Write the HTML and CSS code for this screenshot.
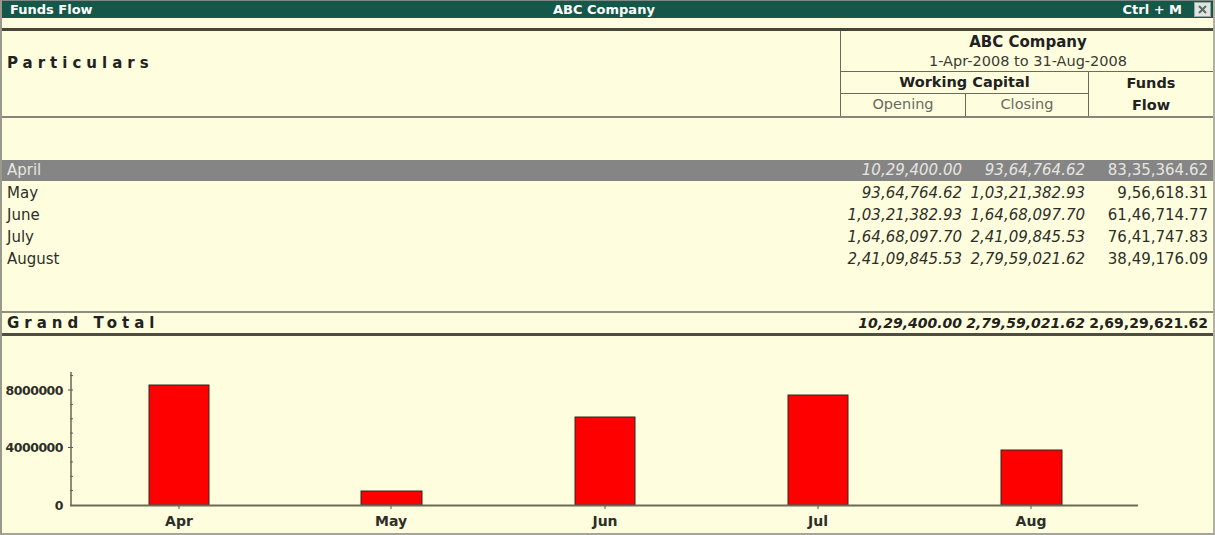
FILE: index.html
```html
<!DOCTYPE html>
<html>
<head>
<meta charset="utf-8">
<title>Funds Flow</title>
<link rel="stylesheet" href="styles.css">
</head>
<body>
<div class="window">
  <div class="titlebar">
    <span class="t-left">Funds Flow</span>
    <span class="t-center">ABC Company</span>
    <span class="t-right">Ctrl + M <span class="close"><svg width="15" height="13" viewBox="0 0 15 13"><path d="M4 3 L11 10 M11 3 L4 10" stroke="#5a6a66" stroke-width="2"/></svg></span></span>
  </div>
  <div class="spacer"></div>
  <div class="report">
    <div class="header">
      <div class="particulars">Particulars</div>
      <div class="period">
        <div class="company">
          <div class="cname">ABC Company</div>
          <div class="cdate">1-Apr-2008 to 31-Aug-2008</div>
        </div>
        <div class="subhead">
          <div class="wc">
            <div class="wc-title">Working Capital</div>
            <div class="wc-cols">
              <div class="wc-open">Opening</div>
              <div class="wc-close">Closing</div>
            </div>
          </div>
          <div class="ff">Funds<br>Flow</div>
        </div>
      </div>
    </div>
    <div class="rows">
      <div class="row selected"><span class="label">April</span><span class="n1">10,29,400.00</span><span class="n2">93,64,764.62</span><span class="n3">83,35,364.62</span></div>
      <div class="row"><span class="label">May</span><span class="n1">93,64,764.62</span><span class="n2">1,03,21,382.93</span><span class="n3">9,56,618.31</span></div>
      <div class="row"><span class="label">June</span><span class="n1">1,03,21,382.93</span><span class="n2">1,64,68,097.70</span><span class="n3">61,46,714.77</span></div>
      <div class="row"><span class="label">July</span><span class="n1">1,64,68,097.70</span><span class="n2">2,41,09,845.53</span><span class="n3">76,41,747.83</span></div>
      <div class="row"><span class="label">August</span><span class="n1">2,41,09,845.53</span><span class="n2">2,79,59,021.62</span><span class="n3">38,49,176.09</span></div>
    </div>
    <div class="total">
      <span class="label">Grand Total</span><span class="n1">10,29,400.00</span><span class="n2">2,79,59,021.62</span><span class="n3">2,69,29,621.62</span>
    </div>
    <div class="chart">
      <svg width="1211" height="197" viewBox="2 336 1211 197">
        <g class="ylabels">
          <text x="63" y="395" text-anchor="end">8000000</text>
          <text x="63" y="452" text-anchor="end">4000000</text>
          <text x="63" y="510" text-anchor="end">0</text>
        </g>
        <g stroke="#55554a" stroke-width="1">
          <line x1="70" y1="490.6" x2="73" y2="490.6"/>
          <line x1="70" y1="476.3" x2="73" y2="476.3"/>
          <line x1="70" y1="461.9" x2="73" y2="461.9"/>
          <line x1="68" y1="447.5" x2="73" y2="447.5"/>
          <line x1="70" y1="433.1" x2="73" y2="433.1"/>
          <line x1="70" y1="418.8" x2="73" y2="418.8"/>
          <line x1="70" y1="404.4" x2="73" y2="404.4"/>
          <line x1="68" y1="390" x2="73" y2="390"/>
          <line x1="70" y1="375.6" x2="73" y2="375.6"/>
        </g>
        <g fill="#ff0000" stroke="#2a2a20" stroke-width="1">
          <rect x="149" y="385" width="60" height="120"/>
          <rect x="361" y="491" width="61" height="14"/>
          <rect x="575" y="417" width="60" height="88"/>
          <rect x="788" y="395" width="60" height="110"/>
          <rect x="1001" y="450" width="61" height="55"/>
        </g>
        <line x1="71" y1="372" x2="71" y2="506" stroke="#66665a" stroke-width="1.5"/>
        <line x1="70" y1="505.5" x2="1138" y2="505.5" stroke="#6b6b58" stroke-width="2"/>
        <g stroke="#55554a" stroke-width="1">
          <line x1="179" y1="506" x2="179" y2="509"/>
          <line x1="391" y1="506" x2="391" y2="509"/>
          <line x1="605" y1="506" x2="605" y2="509"/>
          <line x1="818" y1="506" x2="818" y2="509"/>
          <line x1="1031" y1="506" x2="1031" y2="509"/>
        </g>
        <g class="xlabels" text-anchor="middle">
          <text x="179" y="526">Apr</text>
          <text x="391" y="526">May</text>
          <text x="605" y="526">Jun</text>
          <text x="818" y="526">Jul</text>
          <text x="1031" y="526">Aug</text>
        </g>
      </svg>
    </div>
  </div>
</div>
</body>
</html>
```
FILE: styles.css
```css
html, body {
  margin: 0;
  padding: 0;
  background: #fefedf;
}
body {
  font-family: "DejaVu Sans", Verdana, sans-serif;
  color: #2e2e28;
}
.window {
  width: 1215px;
  height: 535px;
  box-sizing: border-box;
  background: #fefedf;
  border-left: 2px solid #9a9a8c;
  border-right: 2px solid #b0b0a4;
  border-bottom: 2px solid #a4a498;
  overflow: hidden;
  position: relative;
}
.titlebar {
  height: 18px;
  margin-left: -2px;
  margin-right: -2px;
  background: #15584a;
  border-top: 1px solid #7c8a84;
  box-sizing: border-box;
  display: flex;
  align-items: center;
  justify-content: space-between;
  color: #ffffff;
  font-weight: bold;
  font-size: 13px;
  padding: 0 4px 0 10px;
  position: relative;
}
.t-center {
  position: absolute;
  left: 553px;
  top: 0;
  line-height: 17px;
}
.t-right {
  display: flex;
  align-items: center;
  gap: 12px;
}
.close {
  display: inline-block;
  width: 15px;
  height: 13px;
  background: #dfe4e0;
  border: 1px solid #9aa8a2;
  line-height: 0;
}
.spacer {
  height: 10px;
}
.report {
  border-top: 3px solid #45453a;
}
.header {
  display: flex;
  height: 85px;
  border-bottom: 2px solid #85857a;
}
.particulars {
  flex: 1;
  font-weight: bold;
  font-size: 15px;
  letter-spacing: 5px;
  padding: 23px 0 0 5px;
  color: #222;
}
.period {
  width: 372px;
  border-left: 1px solid #6b6b5e;
  display: flex;
  flex-direction: column;
}
.company {
  height: 40px;
  border-bottom: 1px solid #6b6b5e;
  text-align: center;
  padding-left: 2px;
}
.cname {
  font-weight: bold;
  font-size: 15px;
  line-height: 19px;
  margin-top: 2px;
  color: #222;
}
.cdate {
  font-size: 14.5px;
  line-height: 18px;
  color: #3a3a34;
}
.subhead {
  flex: 1;
  display: flex;
}
.wc {
  width: 247px;
  display: flex;
  flex-direction: column;
}
.wc-title {
  height: 22px;
  box-sizing: border-box;
  border-bottom: 1px solid #6b6b5e;
  text-align: center;
  font-weight: bold;
  font-size: 14.5px;
  line-height: 21px;
  color: #222;
}
.wc-cols {
  flex: 1;
  display: flex;
}
.wc-open, .wc-close {
  text-align: center;
  font-size: 14.5px;
  line-height: 21px;
  color: #6a6a62;
}
.wc-open {
  width: 124px;
  border-right: 1px solid #6b6b5e;
}
.wc-close {
  flex: 1;
}
.ff {
  flex: 1;
  border-left: 1px solid #6b6b5e;
  text-align: center;
  font-weight: bold;
  font-size: 14.5px;
  line-height: 22px;
  color: #222;
}
.rows {
  padding-top: 42px;
  height: 193px;
  box-sizing: border-box;
}
.row, .total {
  display: flex;
  height: 22px;
  line-height: 22px;
  font-size: 15px;
}
.row.selected {
  height: 21px;
  line-height: 21px;
  background: #858585;
  color: #e6e6e0;
  margin-bottom: 1px;
}
.label {
  flex: 1;
  padding-left: 5px;
}
.n1, .n2, .n3 {
  text-align: right;
  white-space: nowrap;
}
.n1 {
  width: 122px;
  padding-right: 3px;
  font-style: italic;
}
.n2 {
  width: 120px;
  padding-right: 3px;
  font-style: italic;
}
.n3 {
  width: 120px;
  padding-right: 5px;
}
.total {
  height: 20px;
  line-height: 20px;
  border-top: 2px solid #8c8c80;
  border-bottom: 3px solid #4e4e44;
  font-weight: bold;
  font-size: 14px;
  color: #222;
}
.total .label {
  font-size: 15px;
  letter-spacing: 5px;
}
.chart {
  height: 197px;
  line-height: 0;
}
.chart svg {
  display: block;
}
.ylabels text {
  font-family: "DejaVu Sans", Verdana, sans-serif;
  font-weight: bold;
  font-size: 12.5px;
  letter-spacing: -0.5px;
  fill: #2e2e28;
}
.xlabels text {
  font-family: "DejaVu Sans", Verdana, sans-serif;
  font-weight: bold;
  font-size: 14px;
  fill: #2e2e28;
}
```
